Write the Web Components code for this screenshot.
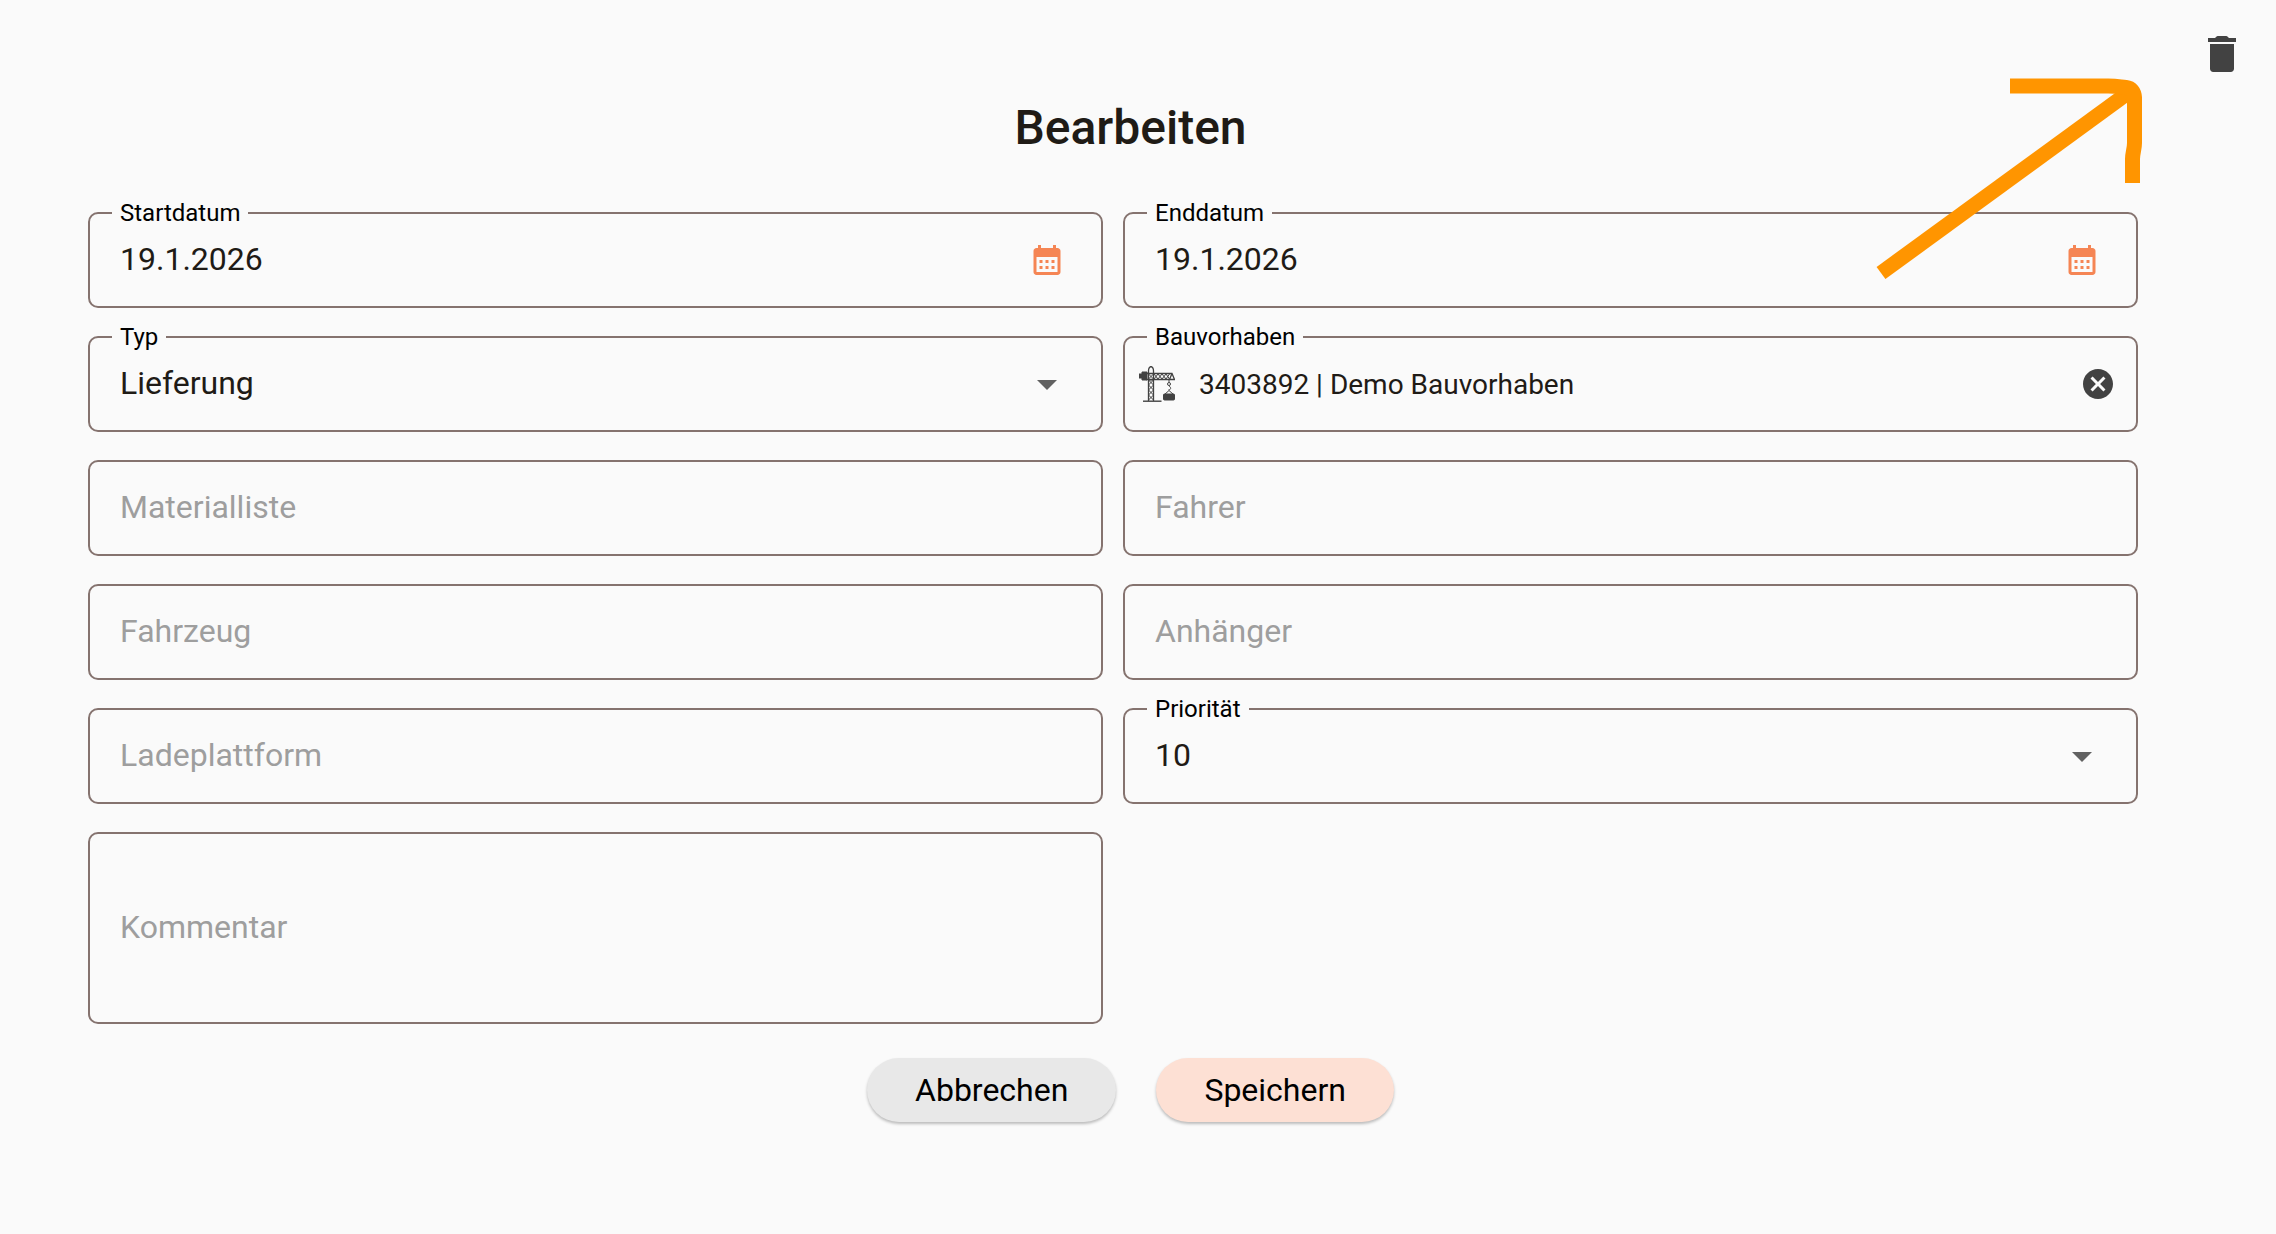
<!DOCTYPE html>
<html lang="de">
<head>
<meta charset="utf-8">
<meta name="viewport" content="width=device-width, initial-scale=1">
<title>Bearbeiten</title>
<style>
  body {
    margin: 0;
    background: #fafafa;
    color: #1f1b16;
    font-family: Roboto, "Liberation Sans", sans-serif;
  }
</style>
</head>
<body>
<edit-page heading="Bearbeiten">
  <icon-button slot="tools" label="Löschen">
    <svg viewBox="0 0 24 24" width="48" height="48" fill="#424242" aria-hidden="true">
      <path d="M6 7h12v12.4c0 1-.7 1.6-1.6 1.6H7.6C6.7 21 6 20.4 6 19.4zM5 4h3.6c.4-.7 1-1 1.700-1h3.4c.7 0 1.3.3 1.700 1H19v2H5z"/>
    </svg>
  </icon-button>

  <date-field label="Startdatum" value="19.1.2026"></date-field>
  <date-field label="Enddatum" value="19.1.2026"></date-field>
  <select-field label="Typ" options="Lieferung,Abholung"></select-field>
  <project-field label="Bauvorhaben" value="3403892 | Demo Bauvorhaben"></project-field>
  <text-field label="Materialliste"></text-field>
  <text-field label="Fahrer"></text-field>
  <text-field label="Fahrzeug"></text-field>
  <text-field label="Anhänger"></text-field>
  <text-field label="Ladeplattform"></text-field>
  <select-field label="Priorität" options="10,9,8,7,6,5,4,3,2,1"></select-field>
  <comment-field label="Kommentar"></comment-field>

  <pill-button slot="actions">Abbrechen</pill-button>
  <pill-button slot="actions" primary>Speichern</pill-button>
  <hint-arrow slot="overlay"></hint-arrow>
</edit-page>

<script>
(function () {
  const ICONS = {
    calendar: `
      <svg viewBox="0 0 24 24" width="36" height="36" fill="#f58554" aria-hidden="true">
        <path d="M19 4h-1V2h-2v2H8V2H6v2H5c-1.1 0-2 .9-2 2v14c0 1.1.9 2 2 2h14c1.1 0 2-.9 2-2V6c0-1.1-.9-2-2-2zm0 16H5V10h14v10zM9 14H7v-2h2v2zm4 0h-2v-2h2v2zm4 0h-2v-2h2v2zm-8 4H7v-2h2v2zm4 0h-2v-2h2v2zm4 0h-2v-2h2v2z"/>
      </svg>`,
    caret: `
      <svg viewBox="0 0 24 24" width="48" height="48" fill="#616161" aria-hidden="true">
        <path d="M7 10l5 5 5-5z"/>
      </svg>`,
    clear: `
      <svg viewBox="0 0 24 24" width="36" height="36" fill="#424242" aria-hidden="true">
        <path d="M12 2C6.47 2 2 6.47 2 12s4.47 10 10 10 10-4.47 10-10S17.53 2 12 2zm5 13.59L15.59 17 12 13.41 8.41 17 7 15.59 10.59 12 7 8.41 8.41 7 12 10.59 15.59 7 17 8.41 13.41 12 17 15.59z"/>
      </svg>`,
    crane: `
      <svg viewBox="0 0 36 36" width="36" height="36" fill="none" stroke="#424242" stroke-width="1" aria-hidden="true">
        <path fill="#424242" d="M3 6h5v8H3v-2H0V8h3z"/>
        <path d="M9.5 35V5q0-4 2.500-4.500Q14.500 1 14.500 5v30M7 7.500h26l2.500 6H7M33 7.500l-2.500 6" stroke-width="1.3"/>
        <path d="M15 8l4 5 4-5 4 5 3.500-5M15 13l4-5 4 5 4-5 3.500 5M9.500 8l5 5M14.500 8l-5 5M9.500 14l5 5-5 5 5 5-5 5M14.500 14l-5 5 5 5-5 5 5 5M9.500 14h5"/>
        <path d="M4 35.2h18.500" stroke-width="1.4"/>
        <path d="M30 14v2.500M30 20c2.500 1.500 2 4-.5 3.800M30 24.500l-4.500 4M30 24.500l4.500 4"/>
        <circle cx="30" cy="18" r="1.5"/>
        <rect x="24.500" y="28" width="11" height="6" rx="1" fill="#424242"/>
      </svg>`,
  };

  const FIELD_STYLE = `
    :host { display: block; }
    * { box-sizing: border-box; }
    .box {
      position: relative;
      display: flex;
      align-items: center;
      min-height: 96px;
      border: 2px solid #85736f;
      border-radius: 10px;
    }
    .box:focus-within { border-color: #f58554; }
    label {
      position: absolute;
      left: 30px;
      padding-bottom: 2px;
      font-size: 32px;
      line-height: 40px;
      color: #9e9e9e;
      pointer-events: none;
    }
    .filled label {
      top: -15px;
      left: 22px;
      padding: 0 8px;
      font-size: 24px;
      line-height: 28px;
      color: #000;
      background: #fafafa;
    }
    input, select, textarea {
      flex: 1;
      min-width: 0;
      width: 100%;
      margin: 0;
      padding: 0 30px 2px;
      border: 0;
      outline: 0;
      background: none;
      color: inherit;
      font: inherit;
      font-size: 32px;
      line-height: 40px;
      appearance: none;
    }
    input, select { height: 92px; }
    button {
      display: flex;
      padding: 0;
      border: 0;
      background: none;
      cursor: pointer;
    }
    svg { display: block; }
  `;

  let fieldCount = 0;

  class BaseField extends HTMLElement {
    constructor() {
      super();
      this.attachShadow({ mode: 'open' });
    }

    get label() {
      return this.getAttribute('label') || '';
    }

    get value() {
      return this.getAttribute('value') || '';
    }

    get extraStyle() {
      return '';
    }

    connectedCallback() {
      fieldCount += 1;
      const id = `field-${fieldCount}`;
      this.shadowRoot.innerHTML = `
        <style>${FIELD_STYLE}${this.extraStyle}</style>
        <div class="box">
          ${this.control(id)}
          <label for="${id}">${this.label}</label>
        </div>
      `;
      this.input = this.shadowRoot.getElementById(id);
      this.input.addEventListener('input', () => this.update());
      this.input.addEventListener('focus', () => this.update());
      this.input.addEventListener('blur', () => this.update());
      this.update();
    }

    // the label moves up into the border once there is something to show
    update() {
      const active = this.input.value !== '' || this.shadowRoot.activeElement === this.input;
      this.shadowRoot.querySelector('.box').classList.toggle('filled', active);
    }
  }

  class TextField extends BaseField {
    control(id) {
      return `<input id="${id}" type="text" value="${this.value}">`;
    }
  }

  class DateField extends BaseField {
    get extraStyle() {
      return 'button { margin-right: 36px; }';
    }

    control(id) {
      return `
        <input id="${id}" type="text" value="${this.value}">
        <button type="button" aria-label="Kalender öffnen">${ICONS.calendar}</button>
      `;
    }
  }

  class SelectField extends BaseField {
    get extraStyle() {
      return `
        select { padding-right: 84px; cursor: pointer; }
        svg { flex: none; margin: 0 30px 0 -78px; pointer-events: none; }
      `;
    }

    control(id) {
      const options = this.getAttribute('options').split(',');
      return `
        <select id="${id}">${options.map((o) => `<option>${o}</option>`).join('')}</select>
        ${ICONS.caret}
      `;
    }
  }

  class ProjectField extends BaseField {
    get extraStyle() {
      return `
        .box { padding-left: 14px; }
        input { padding: 0 24px; font-size: 28px; }
        svg { flex: none; }
        button { margin-right: 20px; }
      `;
    }

    control(id) {
      return `
        ${ICONS.crane}
        <input id="${id}" type="text" value="${this.value}">
        <button type="button" aria-label="Auswahl löschen">${ICONS.clear}</button>
      `;
    }

    connectedCallback() {
      super.connectedCallback();
      this.shadowRoot.querySelector('button').addEventListener('click', () => {
        this.input.value = '';
        this.update();
      });
    }
  }

  class CommentField extends BaseField {
    get extraStyle() {
      return 'textarea { height: 188px; padding: 30px; resize: none; }';
    }

    control(id) {
      return `<textarea id="${id}"></textarea>`;
    }
  }

  class PillButton extends HTMLElement {
    constructor() {
      super();
      this.attachShadow({ mode: 'open' }).innerHTML = `
        <style>
          :host { display: block; }
          button {
            display: block;
            height: 64px;
            padding: 0 48px;
            border: 0;
            border-radius: 32px;
            background: #e8e8e8;
            box-shadow: 0 2px 3px rgba(0, 0, 0, .25);
            color: #000;
            font: inherit;
            font-size: 32px;
            line-height: 40px;
            cursor: pointer;
          }
          :host([primary]) button { background: #fde0d4; }
        </style>
        <button type="button"><slot></slot></button>
      `;
    }
  }

  class IconButton extends HTMLElement {
    constructor() {
      super();
      this.attachShadow({ mode: 'open' });
    }

    connectedCallback() {
      this.shadowRoot.innerHTML = `
        <style>
          :host { display: block; }
          button { display: flex; padding: 0; border: 0; background: none; cursor: pointer; }
        </style>
        <button type="button" aria-label="${this.getAttribute('label')}"><slot></slot></button>
      `;
    }
  }

  class HintArrow extends HTMLElement {
    constructor() {
      super();
      this.attachShadow({ mode: 'open' }).innerHTML = `
        <style>
          :host { display: block; pointer-events: none; }
          svg { display: block; }
        </style>
        <svg viewBox="0 0 270 206" width="270" height="206" fill="none" stroke="#ff9500" stroke-width="15" aria-hidden="true">
          <path d="M5 199L256 16"/>
          <path d="M134 12h98c10 0 12 1 18 1.500q8 1 8.500 10V69c0 6-2 10-2 16v24"/>
        </svg>
      `;
    }
  }

  class EditPage extends HTMLElement {
    constructor() {
      super();
      this.attachShadow({ mode: 'open' });
    }

    connectedCallback() {
      this.shadowRoot.innerHTML = `
        <style>
          :host { display: block; position: relative; }
          header { display: flex; justify-content: flex-end; padding: 30px 30px 0; }
          main {
            display: flex;
            flex-direction: column;
            padding: 22px 103px 112px 88px;
          }
          h1 {
            margin: 0 0 56px;
            font-size: 48px;
            line-height: 56px;
            font-weight: 500;
            text-align: center;
          }
          .fields {
            display: grid;
            grid-template-columns: repeat(2, minmax(0, 1fr));
            gap: 28px 20px;
            margin-right: 35px;
          }
          footer { display: flex; justify-content: center; gap: 40px; margin-top: 34px; }
          .overlay { position: absolute; top: 74px; right: 130px; pointer-events: none; }
        </style>
        <header><slot name="tools"></slot></header>
        <main>
          <h1>${this.getAttribute('heading')}</h1>
          <div class="fields"><slot></slot></div>
          <footer><slot name="actions"></slot></footer>
        </main>
        <div class="overlay"><slot name="overlay"></slot></div>
      `;
    }
  }

  customElements.define('text-field', TextField);
  customElements.define('date-field', DateField);
  customElements.define('select-field', SelectField);
  customElements.define('project-field', ProjectField);
  customElements.define('comment-field', CommentField);
  customElements.define('pill-button', PillButton);
  customElements.define('icon-button', IconButton);
  customElements.define('hint-arrow', HintArrow);
  customElements.define('edit-page', EditPage);
}());
</script>
</body>
</html>
